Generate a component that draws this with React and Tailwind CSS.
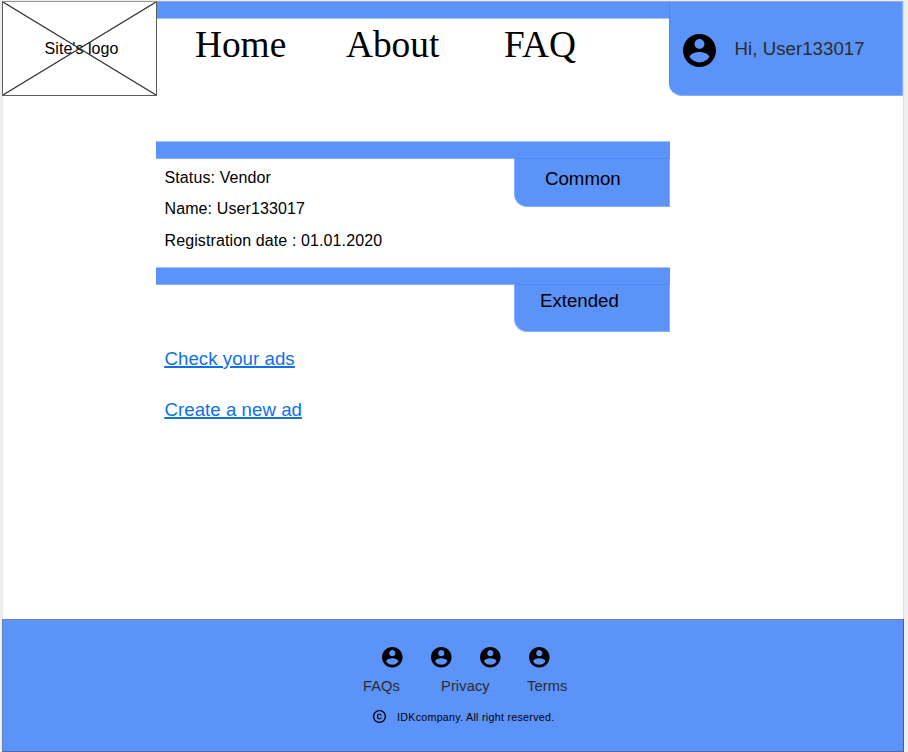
import React from "react";

function UserIcon({ className }) {
  return (
    <svg viewBox="2 2 20 20" className={className} fill="#000">
      <path d="M12 2C6.48 2 2 6.48 2 12s4.48 10 10 10 10-4.48 10-10S17.52 2 12 2zm0 3c1.66 0 3 1.34 3 3s-1.34 3-3 3-3-1.34-3-3 1.34-3 3-3zm0 14.2c-2.5 0-4.71-1.28-6-3.22.03-1.99 4-3.08 6-3.08 1.99 0 5.97 1.09 6 3.08-1.29 1.94-3.5 3.22-6 3.22z" />
    </svg>
  );
}

function CopyrightIcon() {
  return (
    <svg viewBox="2 2 20 20" className="h-[13px] w-[13px] shrink-0" fill="#000">
      <path d="M10.08 10.86c.05-.33.16-.62.3-.87s.34-.46.59-.62c.24-.15.54-.22.91-.23.23.01.44.05.63.13.2.09.38.21.52.36s.25.33.34.53.13.42.14.64h1.79c-.02-.47-.11-.9-.28-1.29s-.4-.73-.7-1.01-.66-.5-1.08-.66-.88-.23-1.39-.23c-.65 0-1.22.11-1.7.34s-.88.53-1.2.92-.56.84-.71 1.36S8 11.29 8 11.87v.27c0 .58.08 1.12.23 1.64s.39.97.71 1.35.72.69 1.2.91 1.05.34 1.7.34c.47 0 .91-.08 1.32-.23s.77-.36 1.08-.63.56-.58.74-.94.29-.74.3-1.15h-1.79c-.01.21-.06.4-.15.58s-.21.33-.36.46-.32.23-.52.3c-.19.07-.39.09-.6.1-.36-.01-.66-.08-.89-.23-.25-.16-.45-.37-.59-.62s-.25-.55-.3-.88-.08-.67-.08-1v-.27c0-.35.03-.68.08-1.01zM12 2C6.48 2 2 6.48 2 12s4.48 10 10 10 10-4.48 10-10S17.52 2 12 2zm0 18c-4.41 0-8-3.59-8-8s3.59-8 8-8 8 3.59 8 8-3.59 8-8 8z" />
    </svg>
  );
}

function Logo() {
  return (
    <div className="relative flex h-[95px] w-[155px] shrink-0 items-center justify-center border border-[#5c5c5c] border-t-[#969896] bg-white">
      <span className="pl-[4px] text-[16px] leading-[16px] tracking-[0.05px] text-black">Site's logo</span>
      <svg
        viewBox="0 0 153 93"
        className="absolute inset-0 h-full w-full"
        stroke="#333"
        strokeWidth="1.2"
      >
        <path d="M0 0L153 93M153 0L0 93" />
      </svg>
    </div>
  );
}

function SectionHeader({ title, className }) {
  return (
    <div className="flex w-[514px] flex-col items-end">
      <div className="h-[18px] w-full border-y border-t-[#a6c4fc] border-b-[#86affb] bg-[#5c93f9]" />
      <div className={className}>{title}</div>
    </div>
  );
}

export default function App() {
  return (
    <div className="flex h-[752px] w-[908px] flex-col overflow-hidden bg-[#eeeeee] pt-px pl-[2px] font-['Liberation_Sans',Arial,sans-serif]">
      <div className="flex h-[618px] w-[902px] flex-col border-r border-[#dcdcdc] border-l border-l-[#e6e6e6] bg-white">
        <header className="-ml-px flex h-[95px] w-[902px]">
          <Logo />
          <nav className="flex h-full w-[512px] flex-col">
            <div className="h-[18px] w-full border-y border-t-[#91aee8] border-b-[#a6c4fc] bg-[#5c93f9]" />
            <div className="flex pt-[6px] pl-[38px] font-['Liberation_Serif','Times_New_Roman',serif] text-[37.33px] leading-[40px] text-black">
              <a className="w-[151px]">Home</a>
              <a className="w-[158px]">About</a>
              <a>FAQ</a>
            </div>
          </nav>
          <div className="flex h-full w-[234px] items-start rounded-bl-[13px] border border-t-[#91aee8] border-r-[#86affb] border-b-[#86affb] border-l-[#4d89f6] bg-[#5c93f9] pt-8 pl-[13px]">
            <UserIcon className="h-[33px] w-[33px]" />
            <span className="mt-[5px] ml-[18.5px] text-[18.67px] leading-[20px] tracking-[0.04px] text-[#2b2b2b]">
              Hi, User133017
            </span>
          </div>
        </header>

        <main className="flex flex-col pt-[45px] pl-[153px] text-black">
          <section className="flex h-[126px] flex-col">
            <SectionHeader
              title="Common"
              className="-mt-px h-[49px] w-[156px] rounded-bl-[13px] border border-t-[#4b88f8] border-r-[#86affb] border-b-[#86affb] border-l-[#86affb] bg-[#5c93f9] pt-[10px] pl-[30px] text-[18.67px] leading-[20px]"
            />
            <div className="-mt-[37px] flex flex-col pl-[8.5px] text-[16px] leading-[16px] tracking-[0.11px]">
              <p className="h-[31px]">Status: Vendor</p>
              <p className="h-[32px]">Name: User133017</p>
              <p>Registration date : 01.01.2020</p>
            </div>
          </section>
          <section className="flex flex-col">
            <SectionHeader
              title="Extended"
              className="-mt-px h-[48px] w-[156px] rounded-bl-[13px] border border-t-[#4b88f8] border-r-[#86affb] border-b-[#86affb] border-l-[#86affb] bg-[#5c93f9] pt-[6px] pl-[25px] text-[18.67px] leading-[20px]"
            />
            <div className="flex flex-col items-start gap-[31px] pt-[17px] pl-[8.5px] text-[18.67px] leading-[20px] tracking-[0.04px] text-[#1071e5] underline decoration-2 underline-offset-1">
              <a>Check your ads</a>
              <a>Create a new ad</a>
            </div>
          </section>
        </main>
      </div>

      <footer className="flex h-[133px] w-[902px] flex-col border border-t-[#6c80a8] border-r-[#3c5f9f] border-b-[#536b98] border-l-[#6681b5] bg-[#5c93f9]">
        <div className="flex h-[47px] gap-[28.2px] pt-[26.5px] pl-[379.2px]">
          <UserIcon className="h-[20.6px] w-[20.6px] overflow-visible" />
          <UserIcon className="h-[20.6px] w-[20.6px] overflow-visible" />
          <UserIcon className="h-[20.6px] w-[20.6px] overflow-visible" />
          <UserIcon className="h-[20.6px] w-[20.6px] overflow-visible" />
        </div>
        <div className="flex pt-[11px] pl-[360px] text-[14.67px] leading-[16px] tracking-[0.1px] text-[#2b2b2b]">
          <a className="w-[78px]">FAQs</a>
          <a className="w-[86px]">Privacy</a>
          <a>Terms</a>
        </div>
        <div className="flex items-start gap-[11px] pt-[16px] pl-[370px] text-[10.67px] leading-[12px] tracking-[0.29px] text-black">
          <CopyrightIcon />
          <span className="pt-px">IDKcompany. All right reserved.</span>
        </div>
      </footer>
    </div>
  );
}
